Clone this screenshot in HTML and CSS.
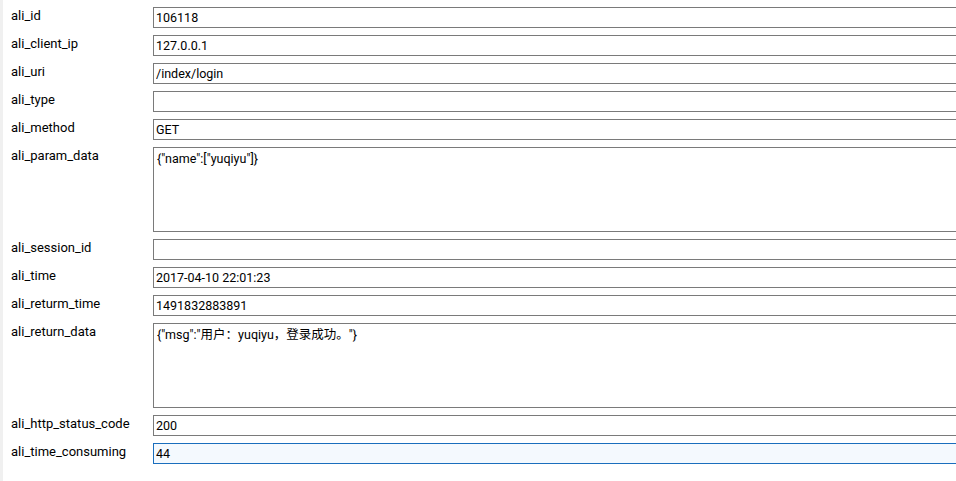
FILE: index.html
```html
<!DOCTYPE html>
<html lang="zh-CN">
<head>
<meta charset="utf-8">
<title>log detail</title>
<link rel="stylesheet" href="styles.css">
</head>
<body>
<div class="page">
  <form class="form">
    <div class="row"><label class="lbl">ali_id</label><input class="field" type="text" value="106118"></div>
    <div class="row"><label class="lbl">ali_client_ip</label><input class="field" type="text" value="127.0.0.1"></div>
    <div class="row"><label class="lbl">ali_uri</label><input class="field" type="text" value="/index/login"></div>
    <div class="row"><label class="lbl">ali_type</label><input class="field" type="text" value=""></div>
    <div class="row"><label class="lbl">ali_method</label><input class="field" type="text" value="GET"></div>
    <div class="row"><label class="lbl">ali_param_data</label><textarea class="area">{"name":["yuqiyu"]}</textarea></div>
    <div class="row"><label class="lbl">ali_session_id</label><input class="field" type="text" value=""></div>
    <div class="row"><label class="lbl">ali_time</label><input class="field" type="text" value="2017-04-10 22:01:23"></div>
    <div class="row"><label class="lbl">ali_returm_time</label><input class="field" type="text" value="1491832883891"></div>
    <div class="row"><label class="lbl">ali_return_data</label><textarea class="area">{"msg":"用户：yuqiyu，登录成功。"}</textarea></div>
    <div class="row"><label class="lbl">ali_http_status_code</label><input class="field" type="text" value="200"></div>
    <div class="row"><label class="lbl">ali_time_consuming</label><input class="field focus" type="text" value="44"></div>
  </form>
</div>
</body>
</html>
```
FILE: styles.css
```css
html, body {
  margin: 0;
  padding: 0;
  background: #ffffff;
  overflow: hidden;
}
body {
  font-family: Roboto, "Noto Sans CJK SC", sans-serif;
  font-size: 13px;
  color: #000;
}
.page {
  border-left: 3px solid #f0f0f0;
  height: 481px;
  box-sizing: border-box;
  padding: 7px 0 0 8px;
}
.form {
  display: flex;
  flex-direction: column;
  gap: 7px;
}
.row {
  display: flex;
  align-items: flex-start;
}
.lbl {
  width: 142px;
  flex: none;
  line-height: 18px;
  margin-top: 0;
}
.field, .area {
  flex: none;
  width: 820px;
  box-sizing: border-box;
  border: 1px solid #7a7a7a;
  margin: 0;
  font-family: Roboto, "Noto Sans CJK SC", sans-serif;
  font-size: 12.5px;
  color: #000;
  background: #fff;
  outline: none;
}
.field {
  height: 21px;
  padding: 0 2px;
}
.area {
  height: 85px;
  padding: 3px 3px;
  resize: none;
  overflow: hidden;
  line-height: 16px;
}
.focus {
  border-color: #1a6ebd;
  background: #f4f9fe;
}
```
